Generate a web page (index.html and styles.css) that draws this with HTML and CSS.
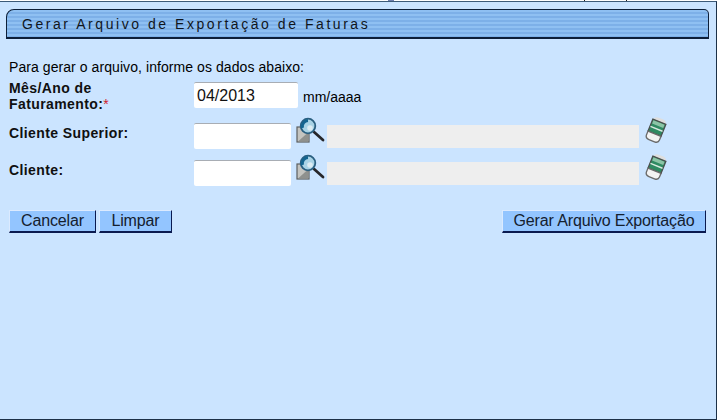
FILE: index.html
```html
<!DOCTYPE html>
<html lang="pt">
<head>
<meta charset="utf-8">
<title>Gerar Arquivo de Exportação de Faturas</title>
<link rel="stylesheet" href="styles.css">
</head>
<body>
<svg width="0" height="0" class="defs">
  <defs>
    <symbol id="lupa" viewBox="0 0 30 28">
      <rect x="1" y="10" width="12" height="15" fill="#c4c4c0" stroke="#5c5f60" stroke-width="1.200"/>
      <path d="M2 24.500 L12.500 24.500 L12.500 15 Z" fill="#8f918e"/>
      <path d="M18 15 L27 23" stroke="#26262a" stroke-width="2.800" stroke-linecap="round"/>
      <circle cx="12" cy="9" r="7.300" fill="#a9d3e6" stroke="#2a5f80" stroke-width="1.800"/>
      <path d="M6.500 11 A6 6 0 0 1 12 3.500" fill="none" stroke="#14648f" stroke-width="3"/>
      <circle cx="14" cy="11" r="2.800" fill="#dcecf3"/>
    </symbol>
    <symbol id="borracha" viewBox="0 0 24 26">
      <g transform="rotate(22 12 13)">
        <path d="M5.500 4 Q6 0.500 10 0.500 L15 0.500 Q18.500 0.500 18.500 4 Z" fill="#dedede"/>
        <rect x="5" y="4" width="14" height="13" fill="#2f8a62" stroke="#4a4f4c" stroke-width="1.300"/>
        <rect x="6" y="5" width="12" height="3.500" fill="#8cc4a6"/>
        <rect x="5.500" y="11" width="13" height="1.400" fill="#d8eadf"/>
        <path d="M5 17 L19 17 L19 21 Q19 24.500 15 24.500 L9 24.500 Q5 24.500 5 21 Z" fill="#f3f3f3" stroke="#6a6a6a" stroke-width="1.300"/>
      </g>
    </symbol>
  </defs>
</svg>
<span class="tick tick-blue"></span>
<span class="tick tick-a"></span>
<span class="tick tick-b"></span>
<main class="panel">
  <h1 class="title"><span>Gerar Arquivo de Exportação de Faturas</span></h1>
  <p class="intro">Para gerar o arquivo, informe os dados abaixo:</p>
  <form class="form">
    <div class="row row-date">
      <label class="label label-wrap" for="mes">Mês/Ano de Faturamento:<span class="req">*</span></label>
      <input class="field field-date" id="mes" type="text" value="04/2013">
      <span class="hint">mm/aaaa</span>
    </div>
    <div class="row row-search">
      <label class="label" for="sup">Cliente Superior:</label>
      <input class="field field-code" id="sup" type="text">
      <svg class="icon-lupa"><use href="#lupa"/></svg>
      <input class="field-name" type="text" disabled>
      <svg class="icon-borracha"><use href="#borracha"/></svg>
    </div>
    <div class="row row-search">
      <label class="label" for="cli">Cliente:</label>
      <input class="field field-code" id="cli" type="text">
      <svg class="icon-lupa"><use href="#lupa"/></svg>
      <input class="field-name" type="text" disabled>
      <svg class="icon-borracha"><use href="#borracha"/></svg>
    </div>
    <div class="actions">
      <button class="btn btn-cancel" type="button">Cancelar</button>
      <button class="btn btn-clear" type="reset">Limpar</button>
      <button class="btn btn-main" type="button">Gerar Arquivo Exportação</button>
    </div>
  </form>
</main>
</body>
</html>
```
FILE: styles.css
```css
html, body {
  margin: 0;
  padding: 0;
  background: #fff;
}
body {
  position: relative;
  width: 717px;
  height: 420px;
  overflow: hidden;
  font-family: "Liberation Sans", Arial, sans-serif;
  color: #000;
}
.defs {
  display: block;
  height: 0;
}
.tick {
  position: absolute;
  top: 0;
  width: 1px;
  height: 1px;
  background: #222;
}
.tick-blue {
  left: 388px;
  width: 6px;
  background: #6f7fb0;
}
.tick-a {
  left: 584px;
}
.tick-b {
  left: 626px;
}
.panel {
  box-sizing: border-box;
  height: 419px;
  margin-top: 1px;
  padding: 7px 7px 0 6px;
  background: #cbe4ff;
  border-top: 1px solid #3c5a78;
  border-right: 1px solid #1c3048;
  border-bottom: 1px solid #1c3048;
}
.title {
  box-sizing: border-box;
  height: 30px;
  margin: 0;
  padding: 0 0 0 15px;
  display: flex;
  align-items: center;
  border: 1px solid #0d1f38;
  border-width: 1px 1px 2px 1px;
  border-radius: 8px 5px 0 0;
  background: repeating-linear-gradient(180deg, #8fc0f2 0, #8fc0f2 2px, #7db0e8 2px, #7db0e8 4px);
  font-size: 14px;
  font-weight: normal;
  letter-spacing: 2.55px;
  color: #10151c;
}
.intro {
  margin: 20px 0 0 3px;
  font-size: 14px;
  letter-spacing: 0.07px;
  line-height: 16px;
}
.form {
  margin: 0;
}
.row {
  display: flex;
  margin-left: 3px;
}
.row-date {
  height: 41px;
  margin-top: 7px;
  align-items: flex-start;
}
.row-search {
  height: 37px;
  align-items: flex-start;
}
.label {
  flex: 0 0 185px;
  padding-top: 2px;
  font-size: 14px;
  letter-spacing: 0.4px;
  font-weight: bold;
  line-height: 16px;
  color: #101010;
}
.label-wrap {
  box-sizing: border-box;
  padding: 0 60px 0 0;
  margin-top: -2px;
}
.req {
  color: #d0202a;
  font-weight: normal;
}
.field {
  box-sizing: border-box;
  height: 26px;
  padding: 0 3px;
  background: #fff;
  border: 0;
  border-top: 1px solid #a8adb4;
  border-radius: 2px;
  font-family: "Liberation Sans", Arial, sans-serif;
  font-size: 16px;
  color: #111;
  outline: none;
}
.field-date {
  width: 104px;
}
.hint {
  margin: 7px 0 0 5px;
  font-size: 14px;
  line-height: 16px;
}
.field-code {
  width: 97px;
}
.icon-lupa {
  width: 30px;
  height: 28px;
  margin: -6px 0 0 5px;
  flex: none;
}
.field-name {
  box-sizing: border-box;
  width: 312px;
  height: 23px;
  margin: 2px 0 0 1px;
  padding: 0;
  background: #eeeeee;
  border: 0;
}
.icon-borracha {
  width: 24px;
  height: 26px;
  margin: -6px 0 0 5px;
  flex: none;
}
.actions {
  display: flex;
  gap: 3px;
  margin: 13px 0 0 3px;
}
.btn {
  box-sizing: border-box;
  height: 23px;
  padding: 0;
  background: #93c5ff;
  border: 1px solid #93c5ff;
  border-right-color: #0a1a50;
  border-bottom: 2px solid #0a1a50;
  border-top-color: #dbeaff;
  border-left-color: #dbeaff;
  border-radius: 0;
  font-family: "Liberation Sans", Arial, sans-serif;
  font-size: 16px;
  letter-spacing: -0.13px;
  line-height: 18px;
  color: #14202e;
}
.btn-cancel {
  width: 87px;
}
.btn-clear {
  width: 73px;
}
.btn-main {
  width: 204px;
  margin-left: auto;
  margin-right: 3px;
}
```
